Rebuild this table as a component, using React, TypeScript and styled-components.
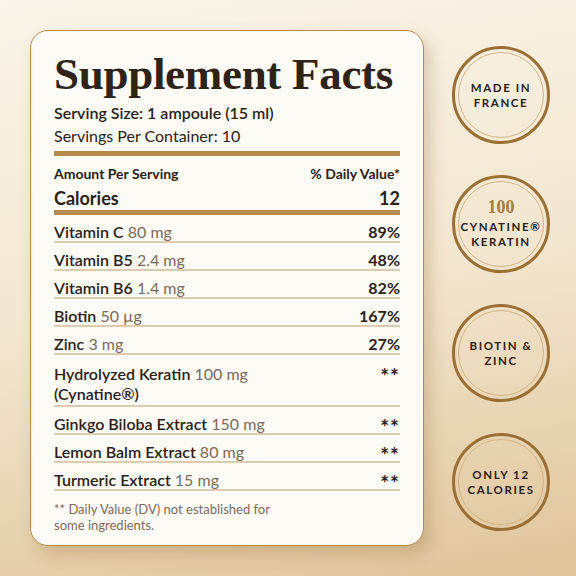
import React from 'react';
import styled, { createGlobalStyle } from 'styled-components';

const GlobalStyle = createGlobalStyle`
    html, body {
        margin: 0;
        padding: 0;
    }

    body {
        font-family: Lato, "Open Sans", sans-serif;
        color: #2b2118;
    }
`;

const Page = styled.main`
    background: linear-gradient(170deg, #faf4ea 0%, #f3e6cf 50%, #dfc499 100%);
    box-sizing: border-box;
    display: flex;
    gap: 28px;
    height: 576px;
    padding: 30px 26px 30px 30px;
    width: 576px;
`;

const Card = styled.section`
    background: #fdfbf6;
    border: 1.5px solid #b58a4c;
    border-radius: 18px;
    box-shadow: 6px 8px 16px rgba(150, 110, 55, 0.3);
    box-sizing: border-box;
    display: flex;
    flex-direction: column;
    flex-shrink: 0;
    height: 516px;
    padding: 16px 23px 0;
    width: 394px;
`;

const Title = styled.h1`
    color: #2e2219;
    font-family: "Liberation Serif", "DejaVu Serif", serif;
    font-size: 45px;
    font-weight: 700;
    letter-spacing: -0.3px;
    line-height: 54px;
    margin: 0;
`;

const Serving = styled.p<{ $bold?: boolean }>`
    font-size: 16px;
    font-weight: ${({ $bold }) => ($bold ? 600 : 400)};
    line-height: 23px;
    margin: 0;
`;

const ThickRule = styled.hr<{ $top?: number }>`
    background: #b58a4c;
    border: none;
    flex-shrink: 0;
    height: 5px;
    margin: ${({ $top }) => $top ?? 0}px 0 0;
`;

const HeadRow = styled.div`
    align-items: center;
    display: flex;
    font-size: 14px;
    font-weight: 700;
    justify-content: space-between;
    line-height: 16px;
    margin-top: 10px;
`;

const CalRow = styled.div`
    align-items: center;
    display: flex;
    font-size: 18px;
    font-weight: 700;
    justify-content: space-between;
    line-height: 22px;
    margin: 5px 0 1px;
`;

const Row = styled.div<{ $tall?: boolean }>`
    align-items: flex-start;
    border-bottom: 2px solid #dccbb0;
    display: flex;
    font-size: 16px;
    justify-content: space-between;
    line-height: ${({ $tall }) => ($tall ? 20 : 18)}px;
    padding: ${({ $tall }) => ($tall ? '9px 0 1px' : '8px 0 0')};
`;

const Name = styled.span`
    font-weight: 600;
`;

const Amount = styled.span`
    color: #7a6a5c;
    font-weight: 400;
`;

const Dv = styled.span`
    font-weight: 700;
`;

const Stars = styled.span`
    font-size: 21px;
    font-weight: 700;
    letter-spacing: 1px;
    line-height: 18px;
    margin: 3px 0 -3px;
`;

const Note = styled.p`
    color: #7a6a5c;
    font-size: 13px;
    line-height: 16px;
    margin: 10px 0 0;
`;

const Badges = styled.aside`
    align-items: center;
    display: flex;
    flex-direction: column;
    gap: 31px;
    justify-content: center;
    width: 98px;
`;

const Badge = styled.div`
    align-items: center;
    border: 3px solid #9b6e34;
    border-radius: 50%;
    box-sizing: border-box;
    display: flex;
    flex-direction: column;
    height: 98px;
    justify-content: center;
    position: relative;
    text-align: center;
    width: 98px;

    &::before {
        border: 1px solid #d2b483;
        border-radius: 50%;
        content: '';
        inset: 3px;
        position: absolute;
    }
`;

const BadgeText = styled.span`
    color: #2b2118;
    font-size: 11.5px;
    font-weight: 700;
    letter-spacing: 1.6px;
    line-height: 15px;
`;

const BadgeNumber = styled.span`
    color: #a67c3d;
    font-family: "Liberation Serif", "DejaVu Serif", serif;
    font-size: 18px;
    font-weight: 700;
    line-height: 19px;
    margin-bottom: 2px;
`;

const rows = [
    { name: 'Vitamin C', amount: '80 mg', dv: '89%' },
    { name: 'Vitamin B5', amount: '2.4 mg', dv: '48%' },
    { name: 'Vitamin B6', amount: '1.4 mg', dv: '82%' },
    { name: 'Biotin', amount: '50 µg', dv: '167%' },
    { name: 'Zinc', amount: '3 mg', dv: '27%' },
];

const extracts = [
    { name: 'Ginkgo Biloba Extract', amount: '150 mg' },
    { name: 'Lemon Balm Extract', amount: '80 mg' },
    { name: 'Turmeric Extract', amount: '15 mg' },
];

const App = () => (
    <Page>
        <GlobalStyle />
        <Card>
            <Title>Supplement Facts</Title>
            <Serving $bold>Serving Size: 1 ampoule (15 ml)</Serving>
            <Serving>Servings Per Container: 10</Serving>
            <ThickRule $top={4} />
            <HeadRow>
                <span>Amount Per Serving</span>
                <span>% Daily Value*</span>
            </HeadRow>
            <CalRow>
                <span>Calories</span>
                <span>12</span>
            </CalRow>
            <ThickRule />
            {rows.map((r) => (
                <Row key={r.name}>
                    <span>
                        <Name>{r.name}</Name> <Amount>{r.amount}</Amount>
                    </span>
                    <Dv>{r.dv}</Dv>
                </Row>
            ))}
            <Row $tall>
                <span>
                    <Name>Hydrolyzed Keratin</Name> <Amount>100 mg</Amount>
                    <br />
                    <Name>(Cynatine®)</Name>
                </span>
                <Stars>**</Stars>
            </Row>
            {extracts.map((r) => (
                <Row key={r.name}>
                    <span>
                        <Name>{r.name}</Name> <Amount>{r.amount}</Amount>
                    </span>
                    <Stars>**</Stars>
                </Row>
            ))}
            <Note>
                ** Daily Value (DV) not established for
                <br />
                some ingredients.
            </Note>
        </Card>
        <Badges>
            <Badge>
                <BadgeText>MADE IN</BadgeText>
                <BadgeText>FRANCE</BadgeText>
            </Badge>
            <Badge>
                <BadgeNumber>100</BadgeNumber>
                <BadgeText>CYNATINE®</BadgeText>
                <BadgeText>KERATIN</BadgeText>
            </Badge>
            <Badge>
                <BadgeText>BIOTIN &amp;</BadgeText>
                <BadgeText>ZINC</BadgeText>
            </Badge>
            <Badge>
                <BadgeText>ONLY 12</BadgeText>
                <BadgeText>CALORIES</BadgeText>
            </Badge>
        </Badges>
    </Page>
);

export default App;
